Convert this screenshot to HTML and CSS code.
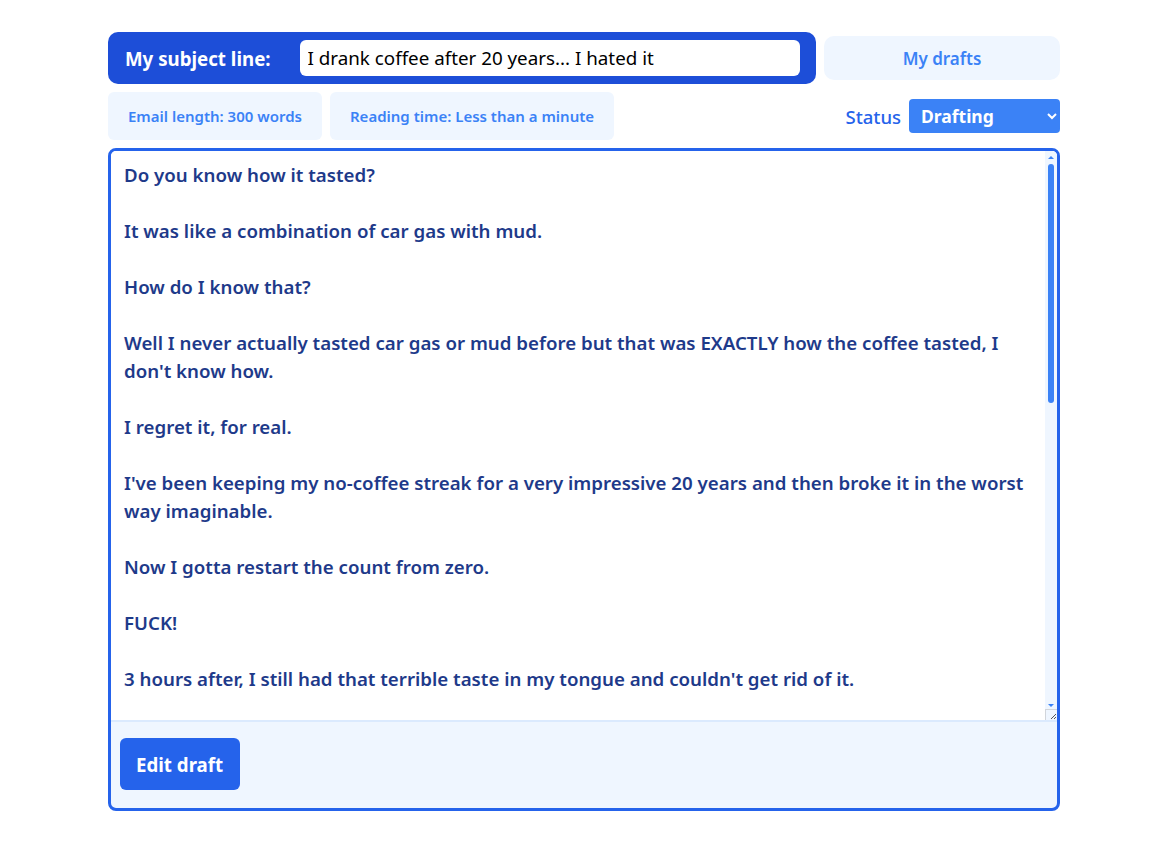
FILE: index.html
```html
<!DOCTYPE html>
<html>
<head>
<meta charset="utf-8">
<link rel="stylesheet" href="styles.css">
</head>
<body>
<div class="page">
  <div class="top-row">
    <div class="subject-bar">
      <label class="subject-label">My subject line:</label>
      <input class="subject-input" type="text" value="I drank coffee after 20 years... I hated it">
    </div>
    <button class="drafts-btn">My drafts</button>
  </div>
  <div class="meta-row">
    <div class="pill">Email length: 300 words</div>
    <div class="pill">Reading time: Less than a minute</div>
    <div class="spacer"></div>
    <div class="status">
      <span class="status-label">Status</span>
      <select class="status-select"><option>Drafting</option></select>
    </div>
  </div>
  <div class="editor">
    <div class="text-wrap">
      <textarea class="body-text">Do you know how it tasted?

It was like a combination of car gas with mud.

How do I know that?

Well I never actually tasted car gas or mud before but that was EXACTLY how the coffee tasted, I don't know how.

I regret it, for real.

I've been keeping my no-coffee streak for a very impressive 20 years and then broke it in the worst way imaginable.

Now I gotta restart the count from zero.

FUCK!

3 hours after, I still had that terrible taste in my tongue and couldn't get rid of it.

I tried brushing my teeth, chewing gum, drinking water, eating a whole bag of chips.

Nothing worked.

So here's my advice to you: if you haven't had coffee in 20 years, don't start now.

Stay strong.

Talk soon,
Me</textarea>
      <div class="scrollbar" aria-hidden="true">
        <span class="arrow arrow-up"></span>
        <span class="thumb"></span>
        <span class="arrow arrow-down"></span>
        <span class="resizer">
          <svg width="8" height="8" viewBox="0 0 8 8"><path d="M7 2 L2 7 M7 5 L5 7" stroke="#555" stroke-width="1" fill="none"/></svg>
        </span>
      </div>
    </div>
    <div class="editor-footer">
      <button class="edit-btn">Edit draft</button>
    </div>
  </div>
</div>
</body>
</html>
```

FILE: styles.css
```css
* { box-sizing: border-box; }
body {
  margin: 0;
  background: #ffffff;
  font-family: "Noto Sans", "Open Sans", sans-serif;
}
.page {
  width: 952px;
  margin: 32px 0 0 108px;
  display: flex;
  flex-direction: column;
  gap: 8px;
}
.top-row {
  display: flex;
  gap: 8px;
  align-items: center;
}
.subject-bar {
  flex: 0 0 708px;
  display: flex;
  align-items: center;
  background: #1d4ed8;
  border-radius: 10px;
  padding: 8px 16px 8px 17px;
  gap: 29px;
}
.subject-label {
  color: #ffffff;
  font-weight: 700;
  font-size: 18.7px;
  white-space: nowrap;
}
.subject-input {
  flex: 1;
  height: 36px;
  border: none;
  border-radius: 6px;
  padding: 0 8px;
  font-family: inherit;
  font-size: 18.8px;
  color: #000;
  outline: none;
}
.drafts-btn {
  flex: 1;
  height: 44px;
  border: none;
  border-radius: 10px;
  background: #eff6ff;
  color: #3b82f6;
  font-family: inherit;
  font-weight: 600;
  font-size: 17px;
}
.meta-row {
  display: flex;
  align-items: center;
  gap: 8px;
}
.pill {
  height: 48px;
  padding: 0 20px;
  display: flex;
  align-items: center;
  background: #eff6ff;
  color: #3b82f6;
  border-radius: 6px;
  font-size: 15px;
  font-weight: 600;
}
.spacer { flex: 1; }
.status {
  display: flex;
  align-items: center;
  gap: 8px;
}
.status-label {
  color: #2563eb;
  font-size: 18.5px;
  font-weight: 500;
}
.status-select {
  width: 151px;
  height: 34px;
  border: none;
  border-radius: 4px;
  background: #3b82f6;
  color: #ffffff;
  font-family: inherit;
  font-size: 17.5px;
  font-weight: 700;
  padding: 0 8px;
  outline: none;
}
.editor {
  border: 3px solid #2563eb;
  border-radius: 8px;
  display: flex;
  flex-direction: column;
  overflow: hidden;
  background: #eff6ff;
}
.text-wrap {
  position: relative;
  display: flex;
  border-bottom: 2px solid #dbeafe;
}
.body-text {
  flex: 1;
  height: 569px;
  border: none;
  resize: none;
  overflow: hidden;
  padding: 10px 26px 10px 13px;
  font-family: inherit;
  font-size: 18.7px;
  font-weight: 600;
  line-height: 28px;
  color: #1e3a8a;
  background: #ffffff;
  outline: none;
}
.scrollbar {
  position: absolute;
  top: 0;
  right: 0;
  bottom: 0;
  width: 12px;
  background: #eff6ff;
  pointer-events: none;
}
.arrow {
  position: absolute;
  left: 3px;
  width: 0;
  height: 0;
  border-left: 3px solid transparent;
  border-right: 3px solid transparent;
}
.arrow-up {
  top: 5px;
  border-bottom: 3px solid #3b82f6;
}
.arrow-down {
  bottom: 13px;
  border-top: 3px solid #3b82f6;
}
.thumb {
  position: absolute;
  left: 3px;
  top: 13px;
  width: 6px;
  height: 239px;
  border-radius: 3px;
  background: #3b82f6;
}
.resizer {
  position: absolute;
  right: 0;
  bottom: 0;
  width: 12px;
  height: 11px;
  background: #eff6ff;
  border-left: 1px solid #d1d5db;
  border-top: 1px solid #d1d5db;
  display: flex;
  align-items: flex-end;
  justify-content: flex-end;
}
.resizer svg { display: block; }
.editor-footer {
  padding: 16px 9px 18px;
  display: flex;
}
.edit-btn {
  height: 52px;
  padding: 0 17px 0 16px;
  border: none;
  border-radius: 6px;
  background: #2563eb;
  color: #ffffff;
  font-family: inherit;
  font-size: 18.7px;
  font-weight: 700;
}
```
